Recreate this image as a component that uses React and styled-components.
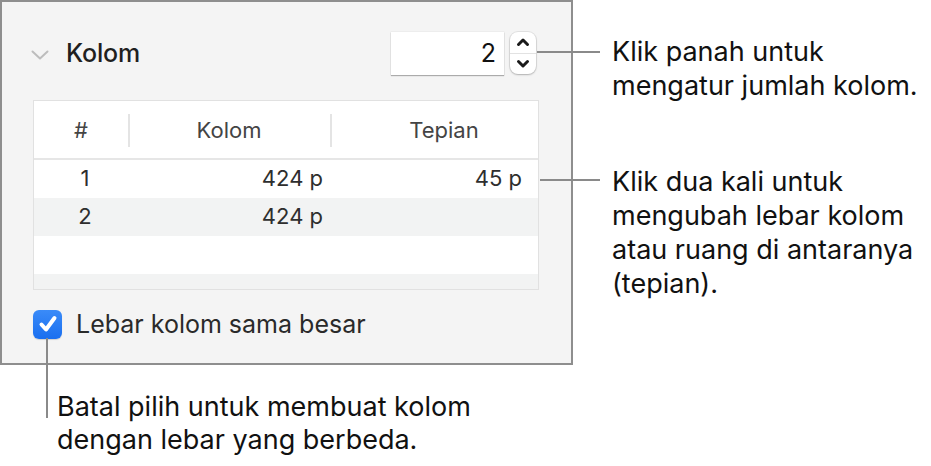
import React from 'react'
import styled, { createGlobalStyle } from 'styled-components'

const GlobalStyle = createGlobalStyle`
  html, body {
    margin: 0;
    padding: 0;
    background: #ffffff;
  }
  body {
    font-family: Inter, "Noto Sans", "Liberation Sans", sans-serif;
    -webkit-font-smoothing: antialiased;
  }
`

const rows = [
  { n: '1', width: '424 p', gap: '45 p' },
  { n: '2', width: '424 p', gap: '' },
  { n: '', width: '', gap: '' },
  { n: '', width: '', gap: '' },
]

const App = () => {
  return (
    <>
      <GlobalStyle />
      <Figure>
        <Panel>
          <HeaderRow>
            <Chevron viewBox="0 0 18 10">
              <path d="M1.5 1.5 L9 8.5 L16.5 1.5" />
            </Chevron>
            <Title>Kolom</Title>
            <Spacer />
            <NumberBox>2</NumberBox>
            <Stepper>
              <StepHalf>
                <svg width="14" height="10" viewBox="0 0 14 10">
                  <path d="M2.5 7.5 L7 3 L11.5 7.5" />
                </svg>
              </StepHalf>
              <StepHalf bottom>
                <svg width="14" height="10" viewBox="0 0 14 10">
                  <path d="M2.5 2.5 L7 7 L11.5 2.5" />
                </svg>
              </StepHalf>
            </Stepper>
          </HeaderRow>

          <Table>
            <HeadRow>
              <HeadCell>#</HeadCell>
              <HeadCell divided>Kolom</HeadCell>
              <HeadCell divided shift={20}>Tepian</HeadCell>
            </HeadRow>
            {rows.map((r, i) => (
              <BodyRow key={i} striped={i % 2 === 1}>
                <Cell align="center">{r.n}</Cell>
                <Cell align="right" pad={7}>{r.width}</Cell>
                <Cell align="right" pad={16}>{r.gap}</Cell>
              </BodyRow>
            ))}
          </Table>

          <CheckRow>
            <CheckBox>
              <svg width="20" height="18" viewBox="0 0 20 18">
                <path d="M3.5 9.5 L8 14.5 L16.5 3" />
              </svg>
            </CheckBox>
            <CheckLabel>Lebar kolom sama besar</CheckLabel>
          </CheckRow>
        </Panel>

        <Notes>
          <Note top={35} lineTop={16} lineLeft={-75} lineWidth={63}>
            Klik panah untuk<br />mengatur jumlah kolom.
          </Note>
          <Note top={62} lineTop={14} lineLeft={-72} lineWidth={60}>
            Klik dua kali untuk<br />mengubah lebar kolom<br />atau ruang di antaranya<br />(tepian).
          </Note>
        </Notes>

        <BottomNote>
          Batal pilih untuk membuat kolom<br />dengan lebar yang berbeda.
        </BottomNote>
      </Figure>
    </>
  )
}

const Figure = styled.div`
  display: grid;
  grid-template-columns: 573px 1fr;
  width: 931px;
  color: #1c1c1c;
`

const Panel = styled.div`
  box-sizing: border-box;
  width: 573px;
  height: 365px;
  background: #f4f4f4;
  border: 2px solid #8e8e8e;
  padding: 29px 32px 0 31px;
  display: flex;
  flex-direction: column;
`

const HeaderRow = styled.div`
  display: flex;
  align-items: center;
  height: 44px;
  padding-right: 3px;
`

const Chevron = styled.svg`
  width: 18px;
  height: 10px;
  margin-left: -2px;
  margin-top: 4px;
  fill: none;
  stroke: #bdbdbd;
  stroke-width: 2;
  stroke-linecap: round;
  stroke-linejoin: round;
`

const Title = styled.div`
  margin-left: 17px;
  font-size: 25px;
  font-weight: 500;
  color: #1f1f1f;
  letter-spacing: -0.2px;
`

const Spacer = styled.div`
  flex: 1;
`

const NumberBox = styled.div`
  box-sizing: border-box;
  width: 113px;
  height: 43px;
  background: #fff;
  box-shadow: 0 1px 1px rgba(0, 0, 0, 0.28), 0 0 0 0.5px rgba(0, 0, 0, 0.06);
  display: flex;
  align-items: center;
  justify-content: flex-end;
  padding-right: 8px;
  font-size: 25px;
  color: #111;
`

const Stepper = styled.div`
  margin-left: 6px;
  width: 26px;
  height: 42px;
  background: #fff;
  border-radius: 8px;
  box-shadow: 0 0 0 1px rgba(0, 0, 0, 0.07), 0 1px 2px rgba(0, 0, 0, 0.22);
  display: flex;
  flex-direction: column;
  overflow: hidden;
`

const StepHalf = styled.div`
  flex: 1;
  display: flex;
  align-items: center;
  justify-content: center;
  border-top: ${props => (props.bottom ? '1px solid #e2e2e2' : 'none')};

  svg {
    fill: none;
    stroke: #1a1a1a;
    stroke-width: 3;
    stroke-linecap: round;
    stroke-linejoin: round;
  }
`

const Table = styled.div`
  margin-top: 25px;
  height: 190px;
  box-sizing: border-box;
  border: 1px solid #e1e1e1;
  background: #fff;
  overflow: hidden;
`

const HeadRow = styled.div`
  display: grid;
  grid-template-columns: 94px 202px 1fr;
  height: 57px;
  border-bottom: 2px solid #e6e6e6;
`

const HeadCell = styled.div`
  position: relative;
  display: flex;
  align-items: center;
  justify-content: center;
  padding-left: ${props => props.shift || 0}px;
  font-size: 22px;
  color: #444;

  &::before {
    content: '';
    display: ${props => (props.divided ? 'block' : 'none')};
    position: absolute;
    left: 0;
    top: 13px;
    width: 2px;
    height: 33px;
    background: #e4e4e4;
  }
`

const BodyRow = styled.div`
  display: grid;
  grid-template-columns: 94px 202px 1fr;
  height: 38px;
  background: ${props => (props.striped ? '#f2f3f3' : '#fff')};
`

const Cell = styled.div`
  display: flex;
  align-items: center;
  justify-content: ${props => (props.align === 'right' ? 'flex-end' : 'center')};
  padding-right: ${props => props.pad || 0}px;
  padding-left: ${props => (props.align === 'center' ? 8 : 0)}px;
  font-size: 22px;
  color: #2e2e2e;
  margin-top: -3px;
`

const CheckRow = styled.div`
  display: flex;
  align-items: center;
  margin-top: 19px;
`

const CheckBox = styled.div`
  width: 29px;
  height: 29px;
  border-radius: 6px;
  background: linear-gradient(#3a8bf8, #1a6ff0);
  box-shadow: 0 1px 1px rgba(0, 0, 0, 0.15);
  display: flex;
  align-items: center;
  justify-content: center;

  svg {
    fill: none;
    stroke: #fff;
    stroke-width: 4;
    stroke-linecap: round;
    stroke-linejoin: round;
  }
`

const CheckLabel = styled.div`
  margin-left: 14px;
  font-size: 25px;
  color: #2a2a2a;
`

const Notes = styled.div`
  padding-left: 39px;
  display: flex;
  flex-direction: column;
`

const Note = styled.div`
  position: relative;
  margin-top: ${props => props.top}px;
  font-size: 27px;
  line-height: 34px;
  color: #111;
  white-space: nowrap;

  &::before {
    content: '';
    position: absolute;
    left: ${props => props.lineLeft}px;
    top: ${props => props.lineTop}px;
    width: ${props => props.lineWidth}px;
    height: 2px;
    background: #8a8a8a;
  }
`

const BottomNote = styled.div`
  grid-column: 1 / span 2;
  position: relative;
  margin-top: 25px;
  padding-left: 57px;
  font-size: 27px;
  line-height: 33px;
  color: #111;

  &::before {
    content: '';
    position: absolute;
    left: 46px;
    top: -52px;
    width: 2px;
    height: 80px;
    background: #8a8a8a;
  }
`

export default App
